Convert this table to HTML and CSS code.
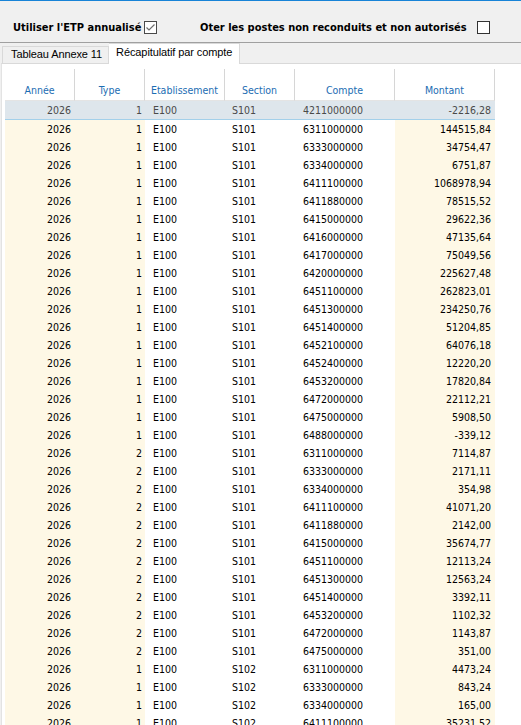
FILE: index.html
```html
<!DOCTYPE html>
<html lang="fr">
<head>
    <meta charset="UTF-8">
    <title>Récapitulatif par compte</title>
    <link rel="stylesheet" href="styles.css">
</head>
<body>
    <div class="topbar">
        <label class="option first">
            <span>Utiliser l'ETP annualisé</span>
            <svg class="check" width="13" height="13" viewBox="0 0 13 13">
                <rect x="0.5" y="0.5" width="12" height="12" fill="#fff" stroke="#4a4a4a"/>
                <path d="M2.5 6.5 L5 9 L10.5 3.5" fill="none" stroke="#6e6e6e" stroke-width="1.2"/>
            </svg>
        </label>
        <label class="option">
            <span>Oter les postes non reconduits et non autorisés</span>
            <svg class="check wide" width="13" height="13" viewBox="0 0 13 13">
                <rect x="0.5" y="0.5" width="12" height="12" fill="#fff" stroke="#333"/>
            </svg>
        </label>
    </div>

    <div class="tabs">
        <div class="tab">Tableau Annexe 11</div>
        <div class="tab active">Récapitulatif par compte</div>
    </div>

    <div class="panel">
        <table class="grid">
            <colgroup>
                <col style="width:70px"><col style="width:70px"><col style="width:80px">
                <col style="width:70px"><col style="width:100px"><col style="width:100px">
            </colgroup>
            <thead>
                <tr><th>Année</th><th>Type</th><th>Etablissement</th><th>Section</th><th>Compte</th><th>Montant</th></tr>
            </thead>
            <tbody>
                <tr class="sel"><td>2026</td><td>1</td><td>E100</td><td>S101</td><td>4211000000</td><td>-2216,28</td></tr>
                <tr><td>2026</td><td>1</td><td>E100</td><td>S101</td><td>6311000000</td><td>144515,84</td></tr>
                <tr><td>2026</td><td>1</td><td>E100</td><td>S101</td><td>6333000000</td><td>34754,47</td></tr>
                <tr><td>2026</td><td>1</td><td>E100</td><td>S101</td><td>6334000000</td><td>6751,87</td></tr>
                <tr><td>2026</td><td>1</td><td>E100</td><td>S101</td><td>6411100000</td><td>1068978,94</td></tr>
                <tr><td>2026</td><td>1</td><td>E100</td><td>S101</td><td>6411880000</td><td>78515,52</td></tr>
                <tr><td>2026</td><td>1</td><td>E100</td><td>S101</td><td>6415000000</td><td>29622,36</td></tr>
                <tr><td>2026</td><td>1</td><td>E100</td><td>S101</td><td>6416000000</td><td>47135,64</td></tr>
                <tr><td>2026</td><td>1</td><td>E100</td><td>S101</td><td>6417000000</td><td>75049,56</td></tr>
                <tr><td>2026</td><td>1</td><td>E100</td><td>S101</td><td>6420000000</td><td>225627,48</td></tr>
                <tr><td>2026</td><td>1</td><td>E100</td><td>S101</td><td>6451100000</td><td>262823,01</td></tr>
                <tr><td>2026</td><td>1</td><td>E100</td><td>S101</td><td>6451300000</td><td>234250,76</td></tr>
                <tr><td>2026</td><td>1</td><td>E100</td><td>S101</td><td>6451400000</td><td>51204,85</td></tr>
                <tr><td>2026</td><td>1</td><td>E100</td><td>S101</td><td>6452100000</td><td>64076,18</td></tr>
                <tr><td>2026</td><td>1</td><td>E100</td><td>S101</td><td>6452400000</td><td>12220,20</td></tr>
                <tr><td>2026</td><td>1</td><td>E100</td><td>S101</td><td>6453200000</td><td>17820,84</td></tr>
                <tr><td>2026</td><td>1</td><td>E100</td><td>S101</td><td>6472000000</td><td>22112,21</td></tr>
                <tr><td>2026</td><td>1</td><td>E100</td><td>S101</td><td>6475000000</td><td>5908,50</td></tr>
                <tr><td>2026</td><td>1</td><td>E100</td><td>S101</td><td>6488000000</td><td>-339,12</td></tr>
                <tr><td>2026</td><td>2</td><td>E100</td><td>S101</td><td>6311000000</td><td>7114,87</td></tr>
                <tr><td>2026</td><td>2</td><td>E100</td><td>S101</td><td>6333000000</td><td>2171,11</td></tr>
                <tr><td>2026</td><td>2</td><td>E100</td><td>S101</td><td>6334000000</td><td>354,98</td></tr>
                <tr><td>2026</td><td>2</td><td>E100</td><td>S101</td><td>6411100000</td><td>41071,20</td></tr>
                <tr><td>2026</td><td>2</td><td>E100</td><td>S101</td><td>6411880000</td><td>2142,00</td></tr>
                <tr><td>2026</td><td>2</td><td>E100</td><td>S101</td><td>6415000000</td><td>35674,77</td></tr>
                <tr><td>2026</td><td>2</td><td>E100</td><td>S101</td><td>6451100000</td><td>12113,24</td></tr>
                <tr><td>2026</td><td>2</td><td>E100</td><td>S101</td><td>6451300000</td><td>12563,24</td></tr>
                <tr><td>2026</td><td>2</td><td>E100</td><td>S101</td><td>6451400000</td><td>3392,11</td></tr>
                <tr><td>2026</td><td>2</td><td>E100</td><td>S101</td><td>6453200000</td><td>1102,32</td></tr>
                <tr><td>2026</td><td>2</td><td>E100</td><td>S101</td><td>6472000000</td><td>1143,87</td></tr>
                <tr><td>2026</td><td>2</td><td>E100</td><td>S101</td><td>6475000000</td><td>351,00</td></tr>
                <tr><td>2026</td><td>1</td><td>E100</td><td>S102</td><td>6311000000</td><td>4473,24</td></tr>
                <tr><td>2026</td><td>1</td><td>E100</td><td>S102</td><td>6333000000</td><td>843,24</td></tr>
                <tr><td>2026</td><td>1</td><td>E100</td><td>S102</td><td>6334000000</td><td>165,00</td></tr>
                <tr><td>2026</td><td>1</td><td>E100</td><td>S102</td><td>6411100000</td><td>35231,52</td></tr>
            </tbody>
        </table>
    </div>
</body>
</html>
```

FILE: styles.css
```css
/* base */
* {
    margin: 0;
    padding: 0;
    box-sizing: border-box;
}

body {
    font-family: "DejaVu Sans Condensed", "DejaVu Sans", sans-serif;
    font-stretch: condensed;
    font-size: 10.5px;
    background: #f0f0f0;
    color: #000;
    overflow: hidden;
}

/* top options */
.topbar {
    height: 43px;
    border-top: 1px solid #1883d7;
    border-bottom: 1px solid #a0a0a0;
    display: flex;
    align-items: flex-start;
    padding: 20px 0 0 13px;
}

.option {
    display: flex;
    align-items: center;
    font-weight: bold;
    font-size: 11px;
    line-height: 13px;
}

.option.first {
    width: 187px;
}

.check {
    margin-left: 3px;
    flex: none;
}

.check.wide {
    margin-left: 10px;
}

/* tabs */
.tabs {
    display: flex;
    align-items: flex-end;
    height: 20px;
    padding-left: 2px;
    font-family: "Liberation Sans", Arial, sans-serif;
    font-stretch: normal;
    font-size: 11px;
    letter-spacing: -0.1px;
}

.tab {
    height: 17px;
    line-height: 15px;
    padding: 0 6px 0 8px;
    border: 1px solid #d9d9d9;
    border-bottom: none;
    background: #f0f0f0;
    color: #000;
    white-space: nowrap;
}

.tab.active {
    position: relative;
    height: 21px;
    margin-bottom: -1px;
    line-height: 17px;
    padding: 0 7px;
    background: #fff;
    border-left: none;
}

/* panel + grid */
.panel {
    background: #fff;
    border-top: 1px solid #d9d9d9;
    border-left: 1px solid #e3e3e3;
    margin-left: 1px;
    padding: 5px 0 0 3px;
    height: 700px;
}

.grid {
    width: 490px;
    table-layout: fixed;
    border-collapse: separate;
    border-spacing: 0;
}

.grid th {
    height: 32px;
    font-weight: normal;
    color: #1c6db3;
    text-align: center;
    vertical-align: bottom;
    padding-bottom: 3px;
    line-height: 13px;
    border-right: 1px solid #d6d6d6;
    border-bottom: 1px solid #e4e4e4;
}

.grid td {
    height: 18px;
    line-height: 17px;
    padding-top: 1px;
    white-space: nowrap;
    overflow: hidden;
}

.grid td:nth-child(1),
.grid td:nth-child(2),
.grid td:nth-child(6) {
    background: #fef8e6;
    text-align: right;
    padding-right: 4px;
}

.grid td:nth-child(2) {
    padding-right: 3px;
}

.grid td:nth-child(3) {
    padding-left: 8px;
}

.grid td:nth-child(4) {
    padding-left: 7px;
}

.grid td:nth-child(5) {
    padding-left: 8px;
}

.grid tr.sel td {
    background: #dee6ec;
    color: #4a4a4a;
    height: 18px;
    border-bottom: 1px solid #a3d0ea;
}
```
